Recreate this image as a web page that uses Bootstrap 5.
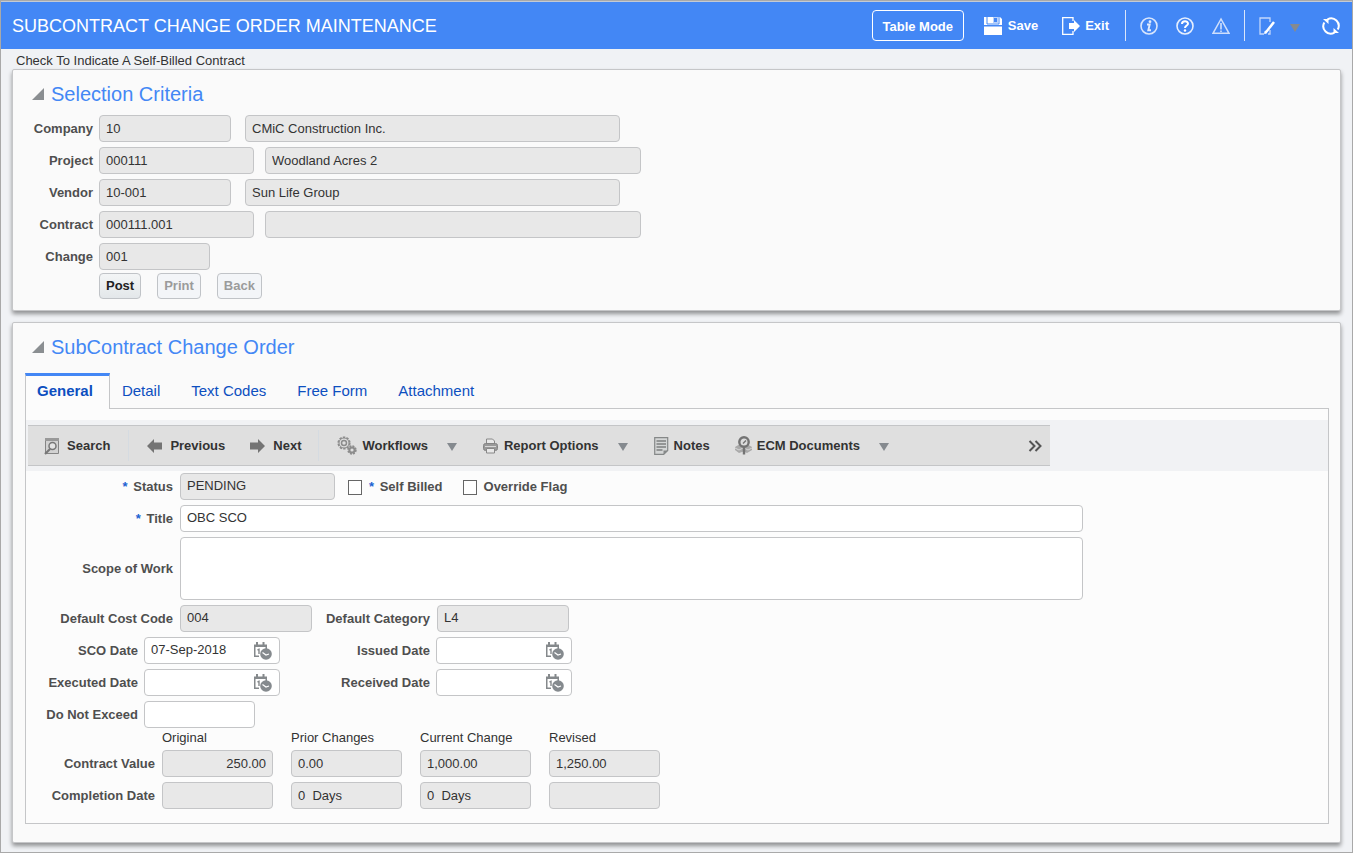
<!DOCTYPE html>
<html lang="en">
<head>
<meta charset="utf-8">
<meta name="viewport" content="width=device-width, initial-scale=1">
<title>Subcontract Change Order Maintenance</title>
<link href="https://cdn.jsdelivr.net/npm/bootstrap@5.3.0/dist/css/bootstrap.min.css" rel="stylesheet">
<style>
  body { font-family: "Liberation Sans", Arial, sans-serif; font-size: 13px; line-height: 16px; color: #333; background: #f0f2f5; }
  .page { border: 1px solid #a9a9a9; padding-bottom: 8px; }

  /* header bar */
  .topbar { background: #4387f5; border-top: 1px solid #c4cad4; height: 48px; padding: 0 12px 0 11px; color: #fff; }
  .topbar h1 { font-size: 18px; line-height: 24px; font-weight: 400; }
  .plain { background: none; border: 0; padding: 0; color: inherit; font-weight: 700; display: inline-flex; align-items: center; }
  .plain svg, .cal svg { display: block; flex: none; }
  .mode-btn { height: 31px; width: 92px; border: 1px solid #fff; border-radius: 4px; background: none; color: #fff; font-weight: 700; padding: 2px 0 0; margin-right: 20px; }
  .t-save { gap: 6px; margin-right: 24px; }
  .t-exit { gap: 4px; margin-right: 16px; }
  .bar-rule { width: 1px; height: 31px; background: #dbe6fa; }
  .group { display: flex; align-items: center; margin: 0 14px; gap: 18px; }
  .group-end { gap: 14px; margin-right: 22px; }

  /* panels */
  .msg { padding: 4px 15px 0; }
  .panel { background: #fafafa; border: 1px solid #c5c6c8; border-radius: 2px; margin: 0 11px 11px; box-shadow: 0 3px 4px rgba(0,0,0,.4); }
  .panel:last-child { margin-bottom: 0; }
  .panel-head { height: 45px; padding: 3px 0 0 19px; gap: 7px; }
  .panel-head h2 { font-size: 20px; line-height: 24px; font-weight: 400; color: #4387f5; }

  /* form rows */
  .rows { display: flex; flex-direction: column; gap: 5px; }
  .line { display: flex; align-items: center; gap: 6px; }
  .form-rows .line { gap: 7px; }
  .form-rows .dates { gap: 6px; }
  .lbl { font-weight: 700; color: #4f4f4f; text-align: right; flex: none; white-space: nowrap; }
  .lbl i { color: #1b62d2; font-style: normal; margin-right: 2px; }
  .w-sel { width: 80px; } .w-main { width: 147px; } .w-date { width: 112px; }
  .w-cat { width: 111px; } .w-date2 { width: 144px; }
  .fld { height: 27px; border: 1px solid #c4c5c7; border-radius: 4px; background: #fff; padding: 0 6px 1px; color: #333; font-size: 13px; line-height: 16px; min-width: 0; }
  .form-rows .fld { padding-bottom: 2px; }
  .fld[readonly] { background: #e8e8e8; }
  .f-s { width: 111px; } .f-m { width: 132px; } .f-l { width: 155px; }
  .f-xl { width: 375px; margin-left: 8px; } .f-xl2 { width: 376px; margin-left: 5px; }
  .f-wide { width: 100%; max-width: 903px; }
  textarea.fld { height: 63px; resize: none; display: block; }
  .actions { gap: 16px; padding: 3px 0 11px 86px; }
  .act { height: 26px; border: 1px solid #c0c3c7; border-radius: 4px; padding: 0 6px 1px; font-weight: 700; color: #222; background: linear-gradient(#f3f5f6, #e3e7ea); }
  .act:disabled { color: #9b9b9b; background: #f3f5f8; }
  .ck { width: 14px; height: 15px; appearance: none; border: 1px solid #666; background: #fff; border-radius: 0; margin: 2px 0 0; }
  .ck:checked { background: #4387f5; }
  .self { margin-left: 6px; } .over { margin-left: 13px; }
  .datebox { display: flex; align-items: center; width: 136px; height: 27px; border: 1px solid #c4c5c7; border-radius: 4px; background: #fff; padding-right: 7px; }
  .datebox input { flex: 1; min-width: 0; border: 0; background: none; padding: 0 0 1px 6px; font-size: 13px; line-height: 16px; color: #333; }
  .cal { border: 0; background: none; padding: 0; }

  /* tabs */
  .tabs { margin: 5px 11px 0 12px; border-bottom: 1px solid #c5c6c8; }
  .tabs .nav-link { height: 35px; border: 0; border-radius: 0; margin: 0 31px 0 0; padding: 5px 0 0; font-size: 15px; line-height: 20px; color: #0d4fc0; border-top: 3px solid transparent; }
  .tabs .nav-link.active { height: 36px; margin: 0 12px -1px 0; padding: 5px 16px 0 11px; font-weight: 700; color: #0d4fc0; background: #fcfcfc; border: 1px solid #c5c6c8; border-width: 3px 1px 0; border-top-color: #4387f5; }
  .tabbox { margin: 0 11px 18px 12px; border: 1px solid #c5c6c8; border-top: 0; background: #fcfcfc; padding: 11px 0 14px; }

  /* toolbar */
  .strip { background: #f1f2f4; padding: 5px 0 5px 2px; margin-bottom: 2px; }
  .tools { height: 41px; width: 100%; max-width: 1022px; background: #dfdfdf; border: 1px solid #c4c5c7; border-width: 1px 0; padding: 0 8px 0 16px; }
  .tools .plain { color: #333; white-space: nowrap; gap: 7px; }
  .tool-rule { width: 1px; height: 31px; background: #d5dbe1; }
  .caret { width: 10px; height: 8px; }
  .t-search { margin-right: 18px; } .t-prev { margin: 0 25px 0 18px; } .t-next { margin-right: 17px; }
  .t-flow { margin-left: 18px; } .t-caret { margin: 2px 26px 0 19px; }
  .tools .t-flow, .tools .t-notes, .tools .t-ecm { gap: 5px; }
  .tools .t-report { gap: 6px; }
  .t-ecm { margin-left: 25px; }

  /* totals table */
  .sums { border-collapse: collapse; width: auto; }
  .sums th, .sums td { padding: 0 18px 5px 0; vertical-align: middle; }
  .sums tbody tr:last-child > * { padding-bottom: 0; }
  .sums thead th { font-weight: 400; height: 22px; padding-bottom: 2px; }
  .sums tbody th { padding-right: 7px; width: 136px; text-align: right; color: #4f4f4f; }
  .sums .fld { display: block; }
</style>
</head>
<body>
<svg class="d-none" aria-hidden="true">
  <symbol id="calendar" viewBox="0 0 19 18"><path d="M1 3h1.500v10.500H6V15H1z M12.500 3H14v4h-1.500z" fill="#85898c"/><path d="M1 2.500h13V5H1z M3 0h2v3H3z M9.500 0h2v3h-2z" fill="#85898c"/><path d="M4.500 8l1.500-.700v4.700" fill="none" stroke="#85898c" stroke-width="1.400"/><circle cx="13" cy="12" r="5.800" fill="#858a8e"/><path d="M9.500 10.500l3.500 2.500 3-1" fill="none" stroke="#fff" stroke-width="1.300"/></symbol>
  <symbol id="down" viewBox="0 0 10 8"><path d="M0 0h10L5 8z" fill="#858a8f"/></symbol>
  <symbol id="fold" viewBox="0 0 12 12"><path d="M12 0v12H0z" fill="#8a8e91"/></symbol>
</svg>
<div class="page min-vh-100">
  <header class="topbar d-flex align-items-center justify-content-between">
    <h1 class="m-0">SUBCONTRACT CHANGE ORDER MAINTENANCE</h1>
    <div class="d-flex align-items-center">
      <button class="mode-btn" type="button">Table Mode</button>
      <button class="plain t-save" type="button">
        <svg width="18" height="18" viewBox="0 0 18 18"><path d="M0 0h16l2 2v6H0z M0 9.500h18V18H0z" fill="#fff"/><path d="M4 0h10v6H4z" fill="#b9d1fb"/><path d="M10 1h3v4h-3z" fill="#4387f5"/><path d="M4 0h5v6H4z" fill="#fff"/><path d="M3 0v7h12V0" fill="none" stroke="#4387f5"/></svg>Save</button>
      <button class="plain t-exit" type="button">
        <svg width="19" height="18" viewBox="0 0 19 18"><path d="M11 4V.700H.700v16.600H11V14" fill="none" stroke="#fff" stroke-width="1.300"/><path d="M7 6h5V3l6 6-6 6v-3H7z" fill="#fff"/></svg>Exit</button>
      <span class="bar-rule"></span>
      <div class="group">
        <button class="plain" type="button" aria-label="Information">
          <svg width="18" height="18" viewBox="0 0 18 18"><circle cx="9" cy="9" r="8" fill="none" stroke="#d9e6fd" stroke-width="1.600"/><circle cx="10" cy="4.700" r="1.400" fill="#e2ecfd"/><path d="M7 7.500h2.700L8.300 13.300H11" fill="none" stroke="#e2ecfd" stroke-width="1.900"/></svg></button>
        <button class="plain" type="button" aria-label="Help">
          <svg width="18" height="18" viewBox="0 0 18 18"><circle cx="9" cy="9" r="8" fill="none" stroke="#e6effe" stroke-width="1.600"/><path d="M6 7c0-3.500 6-3.500 6-.300C12 8.500 9 8.500 9 11" fill="none" stroke="#fff" stroke-width="2"/><circle cx="9" cy="13.500" r="1.200" fill="#fff"/></svg></button>
        <button class="plain" type="button" aria-label="Warnings">
          <svg width="18" height="18" viewBox="0 0 18 18"><path d="M9 2L1 16.300h16z" fill="none" stroke="#cfdffc" stroke-width="1.500"/><path d="M9 6v6.500M9 13.500V15" stroke="#cfdffc" stroke-width="1.600"/></svg></button>
      </div>
      <span class="bar-rule"></span>
      <div class="group group-end">
        <button class="plain" type="button" aria-label="Edit">
          <svg width="17" height="18" viewBox="0 0 17 18"><path d="M11 5V1H1v16h4M11 13v4H9" fill="none" stroke="#c3d7fb" stroke-width="1.300"/><path d="M15 5l-7 9-2 2" stroke="#fff" stroke-width="2.500"/><path d="M5 17l1-3 2 2z" fill="#fff"/></svg></button>
        <button class="plain" type="button" aria-label="Edit options"><svg class="caret mt-1"><use href="#down"/></svg></button>
      </div>
      <button class="plain" type="button" aria-label="Refresh">
        <svg width="18" height="18" viewBox="0 0 18 18"><g fill="none" stroke="#fff" stroke-width="2"><path d="M5.500 2.300A7.500 7.500 0 0 1 15.700 12.500"/><path d="M12.500 15.700A7.500 7.500 0 0 1 2.300 5.500"/></g><path d="M1 2h5.500v5z M17 16h-5.500v-5z" fill="#fff"/></svg></button>
    </div>
  </header>
  <div class="msg">Check To Indicate A Self-Billed Contract</div>

  <main>
  <section class="panel">
    <div class="panel-head d-flex align-items-center"><svg width="12" height="12"><use href="#fold"/></svg><h2 class="m-0">Selection Criteria</h2></div>
    <div class="rows">
      <div class="line"><label class="lbl w-sel" for="company">Company</label><input id="company" class="fld f-m" value="10" readonly><input class="fld f-xl" aria-label="Company name" value="CMiC Construction Inc." readonly></div>
      <div class="line"><label class="lbl w-sel" for="project">Project</label><input id="project" class="fld f-l" value="000111" readonly><input class="fld f-xl2" aria-label="Project name" value="Woodland Acres 2" readonly></div>
      <div class="line"><label class="lbl w-sel" for="vendor">Vendor</label><input id="vendor" class="fld f-m" value="10-001" readonly><input class="fld f-xl" aria-label="Vendor name" value="Sun Life Group" readonly></div>
      <div class="line"><label class="lbl w-sel" for="contract">Contract</label><input id="contract" class="fld f-l" value="000111.001" readonly><input class="fld f-xl2" aria-label="Contract name" readonly></div>
      <div class="line"><label class="lbl w-sel" for="change">Change</label><input id="change" class="fld f-s" value="001" readonly></div>
    </div>
    <div class="actions d-flex">
      <button class="act" type="button">Post</button><button class="act" type="button" disabled>Print</button><button class="act" type="button" disabled>Back</button>
    </div>
  </section>

  <section class="panel">
    <div class="panel-head d-flex align-items-center"><svg width="12" height="12"><use href="#fold"/></svg><h2 class="m-0">SubContract Change Order</h2></div>
    <ul class="nav nav-tabs tabs">
      <li class="nav-item"><a class="nav-link active" href="#general" aria-current="page">General</a></li>
      <li class="nav-item"><a class="nav-link" href="#detail">Detail</a></li>
      <li class="nav-item"><a class="nav-link" href="#text">Text Codes</a></li>
      <li class="nav-item"><a class="nav-link" href="#free">Free Form</a></li>
      <li class="nav-item"><a class="nav-link" href="#attach">Attachment</a></li>
    </ul>
    <div class="tabbox" id="general">
      <div class="strip">
        <div class="tools d-flex align-items-center">
          <button class="plain t-search" type="button"><svg width="16" height="18" viewBox="0 0 16 18"><path d="M1.500 1.500h13v15h-13z" fill="#d2d2d2" stroke="#858585"/><path d="M1 1h14v3H1z" fill="#999"/><circle cx="8.500" cy="9" r="3.500" fill="#e4e4e4" stroke="#777" stroke-width="1.500"/><path d="M6 12l-5 5" stroke="#777" stroke-width="2.200"/></svg>Search</button>
          <span class="tool-rule"></span>
          <button class="plain t-prev" type="button"><svg width="16" height="14" viewBox="0 0 16 14"><path d="M0 7l7-7v3.500h8v7H7V14z" fill="#747474"/></svg>Previous</button>
          <button class="plain t-next" type="button"><svg width="16" height="14" viewBox="0 0 16 14"><path d="M15 7L8 0v3.500H0v7h8V14z" fill="#747474"/></svg>Next</button>
          <span class="tool-rule"></span>
          <button class="plain t-flow" type="button"><svg width="20" height="19" viewBox="0 0 20 19"><g fill="none" stroke="#8c8c8c"><circle cx="7" cy="7" r="5.800" stroke-width="1.600" stroke-dasharray="2.400 1.240"/><circle cx="7" cy="7" r="5"/><circle cx="7" cy="7" r="2.500" stroke-width="1.500"/><circle cx="15" cy="14" r="3.800" stroke-width="1.800" stroke-dasharray="1.900 1.080"/><circle cx="15" cy="14" r="2.600" stroke-width="2"/></g></svg>Workflows</button>
          <button class="plain t-caret" type="button" aria-label="Workflows menu"><svg class="caret"><use href="#down"/></svg></button>
          <button class="plain t-report" type="button"><svg width="15" height="16" viewBox="0 0 15 16"><path d="M3.500 6V1h6l2 2v3" fill="#e8e8e8" stroke="#888"/><rect x=".500" y="5.500" width="14" height="7" rx="2" fill="#999" stroke="#858585"/><path d="M2 8.500h11" stroke="#d8d8d8"/><path d="M3.500 10.500h8v4.500h-8z" fill="#e8e8e8" stroke="#888"/></svg>Report Options</button>
          <button class="plain t-caret" type="button" aria-label="Report options menu"><svg class="caret"><use href="#down"/></svg></button>
          <button class="plain t-notes" type="button"><svg width="15" height="18" viewBox="0 0 15 18"><path d="M.700.700h13v12.800l-4 3.800H.700z" fill="#d4d6d6" stroke="#858888" stroke-width="1.200"/><path d="M2.500 4h9.500M2.500 7h9.500M2.500 10h9.500M2.500 13h6" stroke="#7d8080" stroke-width="1.300"/><path d="M9.500 17v-3.500h4z" fill="#858888"/></svg>Notes</button>
          <button class="plain t-ecm" type="button"><svg width="17" height="19" viewBox="0 0 17 19"><path d="M0 11l5-3 3.500 3L12 8l5 3v3l-5 3-3.500-1.500L4 17l-4-3z" fill="#a9a9a9"/><path d="M0 12l4 2 4-2M17 12l-4 2-4-2" fill="none" stroke="#d6d6d6"/><circle cx="9" cy="6" r="4.700" fill="#ddd" stroke="#737373" stroke-width="2.400"/><path d="M9 11v7.500" stroke="#737373" stroke-width="2.400"/><path d="M8 7.500l3-3" stroke="#737373" stroke-width="1.500"/></svg>ECM Documents</button>
          <button class="plain t-caret" type="button" aria-label="ECM documents menu"><svg class="caret"><use href="#down"/></svg></button>
          <button class="plain ms-auto" type="button" aria-label="More tools"><svg width="14" height="12" viewBox="0 0 14 12"><path d="M1.500 1l5 5-5 5M7.500 1l5 5-5 5" fill="none" stroke="#555" stroke-width="2"/></svg></button>
        </div>
      </div>
      <div class="rows form-rows">
        <div class="line"><label class="lbl w-main" for="status"><i>*</i> Status</label><input id="status" class="fld f-l" value="PENDING" readonly>
          <input class="ck self" type="checkbox" id="self"><label class="lbl" for="self"><i>*</i> Self Billed</label>
          <input class="ck over" type="checkbox" id="over"><label class="lbl" for="over">Override Flag</label></div>
        <div class="line"><label class="lbl w-main" for="title"><i>*</i> Title</label><input id="title" class="fld f-wide" value="OBC SCO"></div>
        <div class="line"><label class="lbl w-main" for="scope">Scope of Work</label><textarea id="scope" class="fld f-wide"></textarea></div>
        <div class="line"><label class="lbl w-main" for="cost">Default Cost Code</label><input id="cost" class="fld f-m" value="004" readonly><label class="lbl w-cat" for="cat">Default Category</label><input id="cat" class="fld f-m" value="L4" readonly></div>
        <div class="line dates"><label class="lbl w-date" for="sco">SCO Date</label><div class="datebox"><input id="sco" value="07-Sep-2018"><button class="cal" type="button" aria-label="Pick SCO date"><svg width="19" height="18"><use href="#calendar"/></svg></button></div><label class="lbl w-date2" for="issued">Issued Date</label><div class="datebox"><input id="issued"><button class="cal" type="button" aria-label="Pick issued date"><svg width="19" height="18"><use href="#calendar"/></svg></button></div></div>
        <div class="line dates"><label class="lbl w-date" for="exec">Executed Date</label><div class="datebox"><input id="exec"><button class="cal" type="button" aria-label="Pick executed date"><svg width="19" height="18"><use href="#calendar"/></svg></button></div><label class="lbl w-date2" for="recv">Received Date</label><div class="datebox"><input id="recv"><button class="cal" type="button" aria-label="Pick received date"><svg width="19" height="18"><use href="#calendar"/></svg></button></div></div>
        <div class="line dates"><label class="lbl w-date" for="exceed">Do Not Exceed</label><input id="exceed" class="fld f-s"></div>
      </div>
      <table class="sums">
        <thead><tr><td></td><th scope="col">Original</th><th scope="col">Prior Changes</th><th scope="col">Current Change</th><th scope="col">Revised</th></tr></thead>
        <tbody>
          <tr><th scope="row">Contract Value</th><td><input class="fld f-s text-end" aria-label="Original contract value" value="250.00" readonly></td><td><input class="fld f-s" aria-label="Prior changes value" value="0.00" readonly></td><td><input class="fld f-s" aria-label="Current change value" value="1,000.00" readonly></td><td><input class="fld f-s" aria-label="Revised value" value="1,250.00" readonly></td></tr>
          <tr><th scope="row">Completion Date</th><td><input class="fld f-s" aria-label="Original completion date" readonly></td><td><input class="fld f-s" aria-label="Prior changes days" value="0  Days" readonly></td><td><input class="fld f-s" aria-label="Current change days" value="0  Days" readonly></td><td><input class="fld f-s" aria-label="Revised completion date" readonly></td></tr>
        </tbody>
      </table>
    </div>
  </section>
  </main>
</div>
<script src="https://cdn.jsdelivr.net/npm/bootstrap@5.3.0/dist/js/bootstrap.bundle.min.js"></script>
</body>
</html>
